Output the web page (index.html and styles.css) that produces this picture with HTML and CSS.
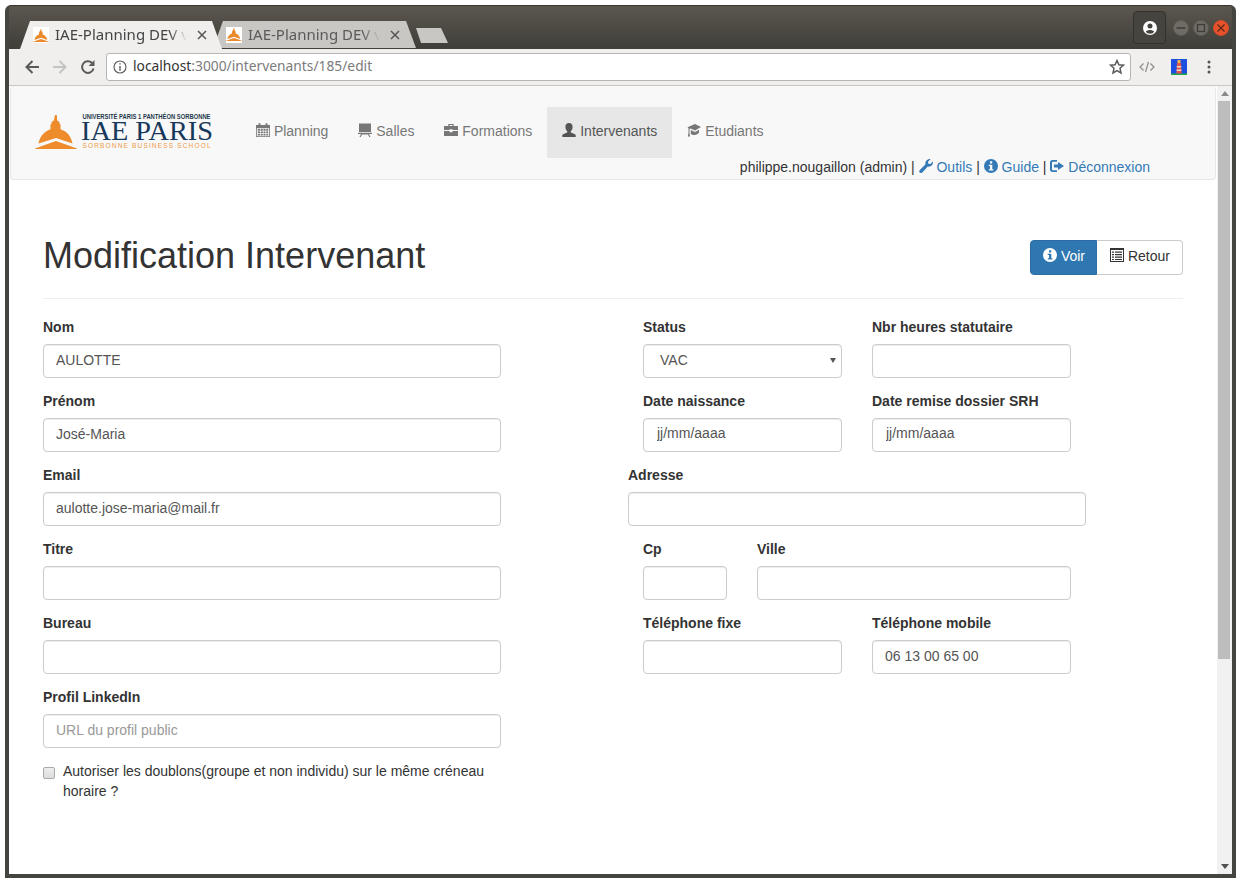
FILE: index.html
```html
<!DOCTYPE html>
<html lang="fr">
<head>
<meta charset="utf-8">
<title>IAE-Planning DEV</title>
<link rel="stylesheet" href="styles.css">
</head>
<body>
<svg class="sprites" xmlns="http://www.w3.org/2000/svg">
  <symbol id="dome" viewBox="0 0 42 34">
    <path d="M20 0h1.800l.4 5.500 2.300 1.500v2l1 .6v4.700C32 16.500 36 21 37.500 28.500L21 23 3.500 28.500C5 21 9.500 16.500 15.500 14.300V9.600l1-.6V7l2.300-1.500z"/>
    <path d="M0 33.500 21 26l21 7.500-.5.500H.5z"/>
  </symbol>
  <symbol id="i-calendar" viewBox="0 0 14 14">
    <path d="M0 2h2.500V.3h2V2h5V.3h2V2H14v12H0zM.8 5.300v7.900h12.400V5.300z"/>
    <path d="M1.800 6h2.300v1.800H1.800zM4.800 6h2v1.800h-2zM7.500 6h2v1.800h-2zM10.200 6h2v1.800h-2zM1.800 8.500h2.300v1.800H1.800zM4.800 8.500h2v1.800h-2zM7.500 8.500h2v1.800h-2zM10.200 8.500h2v1.800h-2zM1.800 11h2.300v1.500H1.800zM4.800 11h2v1.500h-2zM7.500 11h2v1.500h-2zM10.200 11h2v1.500h-2z"/>
  </symbol>
  <symbol id="i-board" viewBox="0 0 14 14">
    <path d="M1 .5h12v8.500H1zM0 9.700h14v1.300H11l1.500 3h-1.300L10 11.500H4L2.800 14H1.500L3 11H0z"/>
  </symbol>
  <symbol id="i-case" viewBox="0 0 14 14">
    <path d="M4.300 3V1h5.400v2H14v4H8.500v-.8h-3V7H0V3zm1.200 0h3V2h-3zM0 8h5.500v1.300h3V8H14V13H0z"/>
  </symbol>
  <symbol id="i-user" viewBox="0 0 14 14">
    <path d="M7 0c2.300 0 3.600 1.700 3.600 3.900 0 1.700-.8 3.300-1.800 4.200v1.300c1.800.9 4.300 1.400 4.900 2.600V14H.3v-2c.6-1.200 3.100-1.700 4.900-2.600V8.100c-1-.9-1.800-2.500-1.800-4.200C3.400 1.700 4.700 0 7 0z"/>
  </symbol>
  <symbol id="i-cap" viewBox="0 0 14 14">
    <path d="M8 1 14 4 8 7.500 3.500 5.500 2.500 6v4l.5 3.500H.8L1.500 10V5.200L.5 4.300z"/>
    <path d="M3.800 7l4.200 2L12 6.700V9.500C11 11 9.500 12 7.500 12c-1.500 0-2.800-.4-3.700-1z"/>
  </symbol>
  <symbol id="i-wrench" viewBox="0 0 14 14">
    <path d="M9.500.2c.7-.2 1.400-.2 2 0L9 2.700l.4 2 2 .4L13.800 2.600c.3 1.500-.1 3-1.200 4-1 1-2.500 1.300-3.800.9L3.300 13.400c-.7.7-1.900.8-2.600.1s-.6-1.900.1-2.600L6.500 5.200C6.100 3.700 6.600 1 9.500.2z"/>
  </symbol>
  <symbol id="i-info" viewBox="0 0 14 14">
    <path fill-rule="evenodd" d="M7 0a7 7 0 1 1 0 14A7 7 0 0 1 7 0zM6 2.200v2.300h2.200V2.200zM4.800 5.800v1.200h1.200v3.300H4.800v1.300h4.600v-1.300H8.300V5.800z"/>
  </symbol>
  <symbol id="i-out" viewBox="0 0 14 14">
    <path d="M2.500 1H7v1.800H3c-.5 0-1 .4-1 1v6.400c0 .6.500 1 1 1h4V13H2.500C1 13 0 12 0 10.500v-7C0 2 1 1 2.500 1z"/>
    <path d="M8 3l6 4-6 4V8.500H4v-3h4z"/>
  </symbol>
  <symbol id="i-list" viewBox="0 0 14 14">
    <path fill-rule="evenodd" d="M0 0h14v14H0zM1 2v11h12V2z"/>
    <path d="M2 3.500h2v1.300H2zM5 3.500h7v1.300H5zM2 6h2v1.300H2zM5 6h7v1.300H5zM2 8.500h2v1.300H2zM5 8.500h7v1.300H5zM2 11h2v1H2zM5 11h7v1H5z"/>
  </symbol>
  <symbol id="i-x" viewBox="0 0 10 10">
    <path d="M1 1l8 8M9 1 1 9" fill="none" stroke="currentColor" stroke-width="1.500"/>
  </symbol>
</svg>

<div class="window">
  <header class="titlebar">
    <div class="tabs">
      <div class="tab tab-active">
        <span class="favicon"><svg class="favicon-art"><use href="#dome"/></svg></span>
        <span class="tab-title">IAE-Planning DEV v</span>
        <svg class="tab-close"><use href="#i-x"/></svg>
      </div>
      <div class="tab tab-idle">
        <span class="favicon"><svg class="favicon-art"><use href="#dome"/></svg></span>
        <span class="tab-title">IAE-Planning DEV v</span>
        <svg class="tab-close"><use href="#i-x"/></svg>
      </div>
      <div class="tab-new"></div>
    </div>
    <div class="win-actions">
      <div class="profile">
        <svg class="profile-icon" viewBox="0 0 16 16"><path fill-rule="evenodd" d="M8 1a7 7 0 1 1 0 14A7 7 0 0 1 8 1zm0 2.600a2.500 2.500 0 1 0 0 5 2.500 2.500 0 0 0 0-5zM3.800 11.500C4.600 13 6.200 13.700 8 13.700s3.400-.7 4.200-2.200C11 10.500 9.500 10 8 10s-3 .5-4.200 1.500z"/></svg>
      </div>
      <div class="win-btns">
        <span class="win-btn"><svg viewBox="0 0 16 16" class="win-glyph"><path d="M3 8h10" stroke="currentColor" stroke-width="1.500"/></svg></span>
        <span class="win-btn"><svg viewBox="0 0 16 16" class="win-glyph"><rect x="4" y="4" width="8" height="8" fill="none" stroke="currentColor" stroke-width="1.500"/></svg></span>
        <span class="win-btn win-close"><svg viewBox="0 0 16 16" class="win-glyph"><path d="M4 4l8 8M12 4l-8 8" stroke="currentColor" stroke-width="1.400"/></svg></span>
      </div>
    </div>
  </header>

  <div class="toolbar">
    <svg class="tool" viewBox="0 0 16 16"><path d="M15 8H2.500M8.500 2 2.500 8l6 6" fill="none" stroke="#5a5a5a" stroke-width="2"/></svg>
    <svg class="tool" viewBox="0 0 16 16"><path d="M1 8h12.500M7.500 2l6 6-6 6" fill="none" stroke="#c4c4c4" stroke-width="2"/></svg>
    <svg class="tool tool-last" viewBox="0 0 16 16"><path d="M13.500 9.500A5.800 5.800 0 1 1 12 4" fill="none" stroke="#5a5a5a" stroke-width="2"/><path d="M14.500 1v6h-6z" fill="#5a5a5a"/></svg>
    <div class="omnibox">
      <svg class="omni-info" viewBox="0 0 14 14"><circle cx="7" cy="7" r="6" fill="none" stroke="#5f5f5f" stroke-width="1.200"/><path d="M6.300 3.200h1.400v1.400H6.300zM6.300 6h1.400v4.800H6.300z" fill="#5f5f5f"/></svg>
      <span class="url"><span class="url-host">localhost</span>:3000/intervenants/185/edit</span>
      <svg class="omni-star" viewBox="0 0 16 16"><path d="M8 1.500l1.900 4.300 4.600.4-3.500 3.100 1 4.600L8 11.500l-4 2.400 1-4.600L1.500 6.200l4.600-.4z" fill="none" stroke="#5a5a5a" stroke-width="1.500"/></svg>
    </div>
    <svg class="ext-code" viewBox="0 0 16 12"><path d="M4.500 2.500 1 6l3.500 3.500M11.500 2.500 15 6l-3.500 3.500M9.500 1 6.500 11" fill="none" stroke="#8a8a8a" stroke-width="1.200"/></svg>
    <svg class="ext-light" viewBox="0 0 16 16"><rect width="16" height="16" fill="#1c4fe0"/><rect y="14.500" width="16" height="1.500" fill="#1fa84a"/><path d="M6 4h4l.6 10.500H5.400z" fill="#e2574c"/><path d="M5.800 7h4.400v1.500H5.800zM5.600 10.500h4.800V12H5.600z" fill="#f2d9c8"/><rect x="6.500" y="1" width="3" height="3" fill="#f4b34a"/></svg>
    <svg class="ext-menu" viewBox="0 0 4 16"><circle cx="2" cy="3" r="1.500" fill="#555"/><circle cx="2" cy="8" r="1.500" fill="#555"/><circle cx="2" cy="13" r="1.500" fill="#555"/></svg>
  </div>

  <div class="viewport">
    <div class="page">
      <nav class="navbar">
        <a class="brand">
          <svg class="logo" viewBox="0 0 178 38">
            <use href="#dome" class="logo-dome" x="-1" y="2" width="42" height="34"/>
            <text class="logo-top" x="46.500" y="5.500" textLength="128" lengthAdjust="spacingAndGlyphs">UNIVERSITÉ PARIS 1 PANTHÉON SORBONNE</text>
            <text class="logo-main" x="45" y="27" textLength="132" lengthAdjust="spacingAndGlyphs">IAE PARIS</text>
            <text class="logo-sub" x="46.500" y="35" textLength="128" lengthAdjust="spacing">SORBONNE BUSINESS SCHOOL</text>
          </svg>
        </a>
        <div class="nav-main">
          <ul class="nav-links">
            <li><a class="nav-link"><svg class="gi"><use href="#i-calendar"/></svg> Planning</a></li>
            <li><a class="nav-link"><svg class="gi"><use href="#i-board"/></svg> Salles</a></li>
            <li><a class="nav-link"><svg class="gi"><use href="#i-case"/></svg> Formations</a></li>
            <li><a class="nav-link is-active"><svg class="gi"><use href="#i-user"/></svg> Intervenants</a></li>
            <li><a class="nav-link"><svg class="gi"><use href="#i-cap"/></svg> Etudiants</a></li>
          </ul>
          <p class="user-line">philippe.nougaillon (admin) | <a class="ulink"><svg class="gi"><use href="#i-wrench"/></svg> Outils</a> | <a class="ulink"><svg class="gi"><use href="#i-info"/></svg> Guide</a> | <a class="ulink"><svg class="gi"><use href="#i-out"/></svg> Déconnexion</a></p>
        </div>
      </nav>

      <main class="content">
        <div class="page-header">
          <h1 class="heading">Modification Intervenant</h1>
          <div class="btn-group">
            <a class="btn btn-primary"><svg class="gi"><use href="#i-info"/></svg> Voir</a>
            <a class="btn btn-default"><svg class="gi"><use href="#i-list"/></svg> Retour</a>
          </div>
        </div>

        <form class="form-grid">
          <div class="col-left">
            <div class="field"><label class="lbl">Nom</label><input class="ctl" type="text" value="AULOTTE"></div>
            <div class="field"><label class="lbl">Prénom</label><input class="ctl" type="text" value="José-Maria"></div>
            <div class="field"><label class="lbl">Email</label><input class="ctl" type="text" value="aulotte.jose-maria@mail.fr"></div>
            <div class="field"><label class="lbl">Titre</label><input class="ctl" type="text"></div>
            <div class="field"><label class="lbl">Bureau</label><input class="ctl" type="text"></div>
            <div class="field"><label class="lbl">Profil LinkedIn</label><input class="ctl" type="text" placeholder="URL du profil public"></div>
            <label class="check"><input class="check-box" type="checkbox"><span>Autoriser les doublons(groupe et non individu) sur le même créneau horaire ?</span></label>
          </div>
          <div class="col-right">
            <div class="frow">
              <div class="field w199"><label class="lbl">Status</label><div class="select-wrap"><select class="ctl ctl-select"><option>VAC</option></select></div></div>
              <div class="field w199"><label class="lbl">Nbr heures statutaire</label><input class="ctl" type="text"></div>
            </div>
            <div class="frow">
              <div class="field w199"><label class="lbl">Date naissance</label><input class="ctl ctl-date" type="text" value="jj/mm/aaaa"></div>
              <div class="field w199"><label class="lbl">Date remise dossier SRH</label><input class="ctl ctl-date" type="text" value="jj/mm/aaaa"></div>
            </div>
            <div class="frow frow-flush">
              <div class="field w458"><label class="lbl">Adresse</label><input class="ctl" type="text"></div>
            </div>
            <div class="frow">
              <div class="field w84"><label class="lbl">Cp</label><input class="ctl" type="text"></div>
              <div class="field w314"><label class="lbl">Ville</label><input class="ctl" type="text"></div>
            </div>
            <div class="frow">
              <div class="field w199"><label class="lbl">Téléphone fixe</label><input class="ctl" type="text"></div>
              <div class="field w199"><label class="lbl">Téléphone mobile</label><input class="ctl" type="text" value="06 13 00 65 00"></div>
            </div>
          </div>
        </form>
      </main>
    </div>

    <div class="scrollbar">
      <span class="arrow arrow-up"></span>
      <span class="thumb"></span>
      <span class="arrow arrow-down"></span>
    </div>
  </div>
</div>
</body>
</html>
```

FILE: styles.css
```css
* { box-sizing: border-box; }
html, body { margin: 0; padding: 0; height: 100%; background: #fff; overflow: hidden; }
body { font-family: "Liberation Sans", Arial, sans-serif; font-size: 14px; line-height: 20px; color: #333; }
.sprites { width: 0; height: 0; position: absolute; }

.window {
  width: 1231px; height: 873px; margin: 5px 0 0 5px;
  display: flex; flex-direction: column;
  background: #454440;
  border: solid #454440; border-width: 0 4px 4px;
  border-radius: 6px 6px 0 0;
  overflow: hidden;
}

/* Title bar */
.titlebar {
  height: 44px; flex: none; margin: 0 -4px; padding-left: 15px;
  display: flex; justify-content: space-between; align-items: flex-end;
  background: linear-gradient(#5b574f, #403e39);
  border-top: 1px solid #38362f;
}
.tabs { display: flex; align-items: flex-end; height: 28px; font-family: "Noto Sans", "Open Sans", sans-serif; font-size: 15px; }
.tab {
  height: 28px; display: flex; align-items: center; flex: none;
  clip-path: polygon(0 100%, 10px 0, calc(100% - 10px) 0, 100% 100%);
}
.tab-active { width: 202px; padding: 0 15px 0 13px; background: #f0efee; color: #444; z-index: 1; }
.tab-idle { width: 203px; margin: 0 0 1px -9px; padding: 0 16px 0 13px; background: #c9c7c4; color: #5a5a5a; height: 27px; }
.favicon { width: 16px; height: 16px; background: #fff; flex: none; display: flex; align-items: center; justify-content: center; margin-right: 6px; }
.favicon-art { width: 16px; height: 13px; fill: #ea8a2c; }
.tab-title {
  flex: 1; min-width: 0; overflow: hidden; white-space: nowrap; line-height: 20px; margin-top: -2px;
  -webkit-mask-image: linear-gradient(90deg, #000 84%, transparent 97%);
  mask-image: linear-gradient(90deg, #000 84%, transparent 97%);
}
.tab-close { width: 10px; height: 10px; margin-left: 6px; flex: none; color: #555; }
.tab-new {
  width: 32px; height: 15px; margin: 0 0 6px 0; flex: none; background: #c9c7c4;
  clip-path: polygon(0 0, 25px 0, 100% 100%, 5px 100%);
}
.win-actions { display: flex; align-items: flex-start; height: 100%; padding-top: 5px; }
.profile {
  width: 33px; height: 33px; display: flex; align-items: center; justify-content: center;
  border: 1px solid #33322d; border-radius: 4px; background: #46443e;
}
.profile-icon { width: 16px; height: 16px; fill: #fff; }
.win-btns { display: flex; gap: 4px; padding: 9px 7px 0 7px; }
.win-btn { width: 16px; height: 16px; border-radius: 50%; background: #6f6c65; color: #3d3b36; border: 1px solid #5d5a54; display: block; }
.win-close { background: #e6522c; color: #5a2a18; border-color: #d24a28; }
.win-glyph { display: block; width: 14px; height: 14px; }

/* Toolbar */
.toolbar {
  height: 37px; flex: none; display: flex; align-items: center;
  background: #f0efee; border-bottom: 1px solid #c8c7c4; padding: 0 0 1px 15px;
}
.tool { width: 16px; height: 16px; margin-right: 12px; flex: none; }
.tool-last { margin-right: 10px; }
.omnibox {
  width: 1025px; height: 28px; padding: 0 5px 0 6px; flex: none;
  display: flex; align-items: center;
  background: #fff; border: 1px solid #b6b6b6; border-radius: 3px;
}
.omni-info { width: 14px; height: 14px; flex: none; }
.url { flex: 1; margin: -2px 0 0 6px; font-family: "Noto Sans", "Open Sans", sans-serif; font-size: 13.800px; color: #7b7b7b; white-space: nowrap; }
.url-host { color: #333; }
.omni-star { width: 16px; height: 16px; flex: none; }
.ext-code { width: 16px; height: 12px; margin-left: 8px; flex: none; }
.ext-light { width: 16px; height: 16px; margin-left: 16px; flex: none; }
.ext-menu { width: 4px; height: 16px; margin-left: 20px; flex: none; }

/* Page */
.viewport { flex: 1; min-height: 0; display: flex; background: #fff; }
.page { flex: 1; min-width: 0; overflow: hidden; }
.scrollbar { width: 15px; flex: none; background: #f1f1f1; display: flex; flex-direction: column; align-items: center; justify-content: space-between; padding: 5px 0 5px; }
.thumb { width: 12px; height: 558px; margin: 5px 2px auto 0; background: #bdbdbd; }
.arrow { width: 0; height: 0; border: 4px solid transparent; flex: none; }
.arrow-up { border-bottom: 5px solid #8a8a8a; border-top: 0; }
.arrow-down { border-top: 5px solid #505050; border-bottom: 0; }

.navbar {
  height: 94px; margin: 0 1px; display: flex;
  background: #f8f8f8; border: 1px solid #e7e7e7; border-top: 0; border-radius: 4px;
}
.brand { flex: none; width: 230px; padding: 27px 0 0 25px; display: block; }
.logo { width: 178px; height: 38px; display: block; overflow: visible; }
.logo-dome { fill: #ee8b2b; }
.logo-top { font: bold 6.500px "Liberation Sans", sans-serif; fill: #24384c; }
.logo-main { font: 28px "Liberation Serif", serif; fill: #17385a; }
.logo-sub { font: 6.500px "Liberation Sans", sans-serif; fill: #ee9a45; }
.nav-main { flex: 1; min-width: 0; padding: 21px 65px 0 0; }
.nav-links { display: flex; list-style: none; margin: 0; padding: 0; }
.nav-link { display: block; padding: 14px 15px 17px; color: #777; }
.nav-link.is-active { color: #555; background: #e7e7e7; }
.gi { width: 14px; height: 14px; fill: currentColor; vertical-align: -1px; }
.user-line { margin: -1px 0 0; text-align: right; color: #333; }
.ulink { color: #337ab7; }

.content { padding: 55px 34px 0; }
.page-header { display: flex; justify-content: space-between; align-items: flex-start; padding-bottom: 23px; border-bottom: 1px solid #eee; height: 64px; }
.heading { margin: 1px 0 0; font-size: 36px; line-height: 40px; font-weight: 500; color: #333; }
.btn-group { display: flex; margin-top: 5px; }
.btn { display: block; height: 35px; padding: 5px 12px 7px; border: 1px solid #ccc; white-space: nowrap; }
.btn-primary { background: #2e77b1; border-color: #2e6da4; color: #fff; border-radius: 4px 0 0 4px; width: 67px; }
.btn-default { background: #fff; color: #333; border-left: 0; border-radius: 0 4px 4px 0; width: 86px; padding-left: 13px; }

.form-grid { display: grid; grid-template-columns: 458px 1fr; column-gap: 127px; padding-top: 18px; }
.field { margin-bottom: 13px; }
.lbl { display: block; margin-bottom: 7px; font-weight: 700; color: #333; }
.ctl {
  display: block; width: 100%; height: 34px; padding: 5px 12px 7px;
  font: 14px/20px "Liberation Sans", Arial, sans-serif; color: #555;
  background: #fff; border: 1px solid #ccc; border-radius: 4px;
  box-shadow: inset 0 1px 1px rgba(0,0,0,.075);
}
.ctl::placeholder { color: #999; }
.ctl-date { padding: 4px 12px 8px 13px; }
.ctl-select { appearance: none; -webkit-appearance: none; padding-left: 16px; }
.select-wrap { position: relative; }
.select-wrap::after {
  content: ""; position: absolute; right: 6px; top: 14px; width: 0; height: 0;
  border: 3px solid transparent; border-top: 5px solid #555; border-bottom: 0;
}
.frow { display: flex; gap: 30px; margin-left: 15px; }
.frow-flush { margin-left: 0; }
.w199 { width: 199px; }
.w458 { width: 458px; }
.w84 { width: 84px; }
.w314 { width: 314px; }
.check { display: flex; color: #333; }
.check-box {
  appearance: none; -webkit-appearance: none;
  width: 12px; height: 12px; margin: 6px 8px 0 0; flex: none;
  background: linear-gradient(#eee, #ddd); border: 1px solid #aaa; border-radius: 2px;
}
```
